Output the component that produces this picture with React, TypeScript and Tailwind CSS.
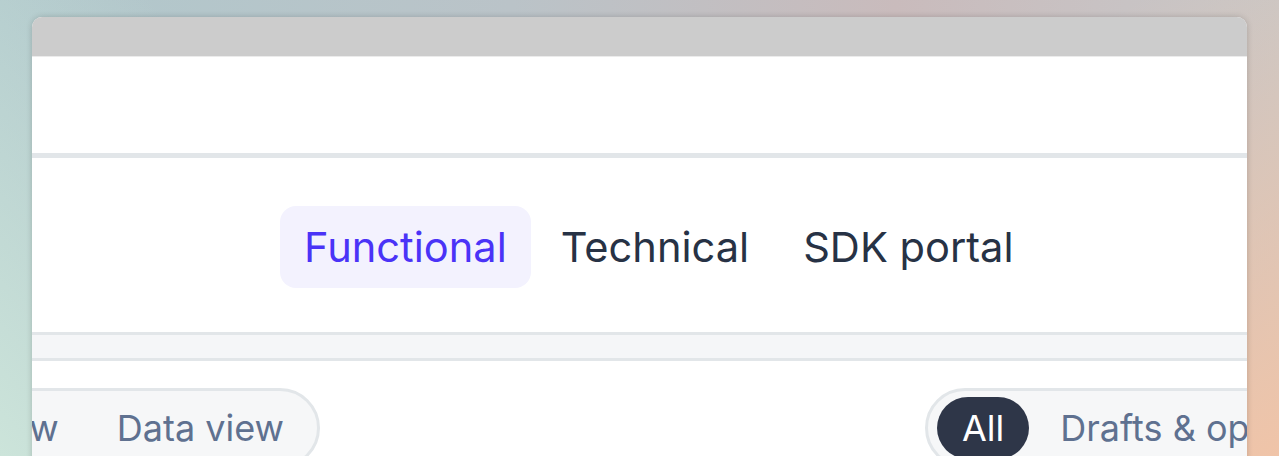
import React from "react";

export default function App() {
  return (
    <div
      className="relative h-[456px] w-[1279px] overflow-hidden pl-[32px] pr-[32px] pt-[17px]"
      style={{ fontFamily: "Inter, 'Noto Sans', sans-serif" }}
    >
      <div className="absolute inset-0 bg-[linear-gradient(90deg,#b0c8cc_0%,#bac3c8_40%,#c9bbbc_70%,#c8c3c4_88%,#c8c7c7_100%)]" />
      <div className="absolute inset-0 bg-[linear-gradient(45deg,rgba(204,228,218,1)_0%,rgba(204,228,218,0)_35%)]" />
      <div className="absolute inset-0 bg-[linear-gradient(150deg,rgba(240,196,168,0)_55%,rgba(240,196,168,1)_100%)]" />
      <div className="relative h-[600px] overflow-hidden rounded-t-[10px] bg-white shadow-[0_0_6px_rgba(0,0,0,0.18)]">
        <div className="h-[39px] bg-[#cccccc]" />
        <div className="h-[1px] bg-[#ebebeb]" />
        <div className="h-[96px] bg-white" />
        <div className="h-[5px] bg-[#e2e6e9]" />
        <div className="flex h-[174px] items-start bg-white pl-[248px] pt-[48px]">
          <div className="flex gap-[6px]">
            <div className="flex h-[82px] items-center rounded-[16px] bg-[#f3f2fe] px-[24px] text-[41.6px] text-[#4a33f7]">
              Functional
            </div>
            <div className="flex h-[82px] items-center rounded-[16px] px-[24px] text-[41.6px] text-[#273245]">
              Technical
            </div>
            <div className="flex h-[82px] items-center rounded-[16px] px-[24px] text-[41.6px] text-[#273245]">
              SDK portal
            </div>
          </div>
        </div>
        <div className="h-[3px] bg-[#e2e6e9]" />
        <div className="h-[23px] bg-[#f5f6f8]" />
        <div className="h-[3px] bg-[#e2e6e9]" />
        <div className="flex items-start pt-[27px]">
          <div className="flex w-[288px] shrink-0 justify-end">
            <div className="flex h-[80px] shrink-0 items-center rounded-full border-[3px] border-[#e2e6e9] bg-[#f6f7f8] px-[4px] text-[36px] text-[#5f7190]">
              <div className="whitespace-nowrap px-[29px]">Board view</div>
              <div className="whitespace-nowrap px-[29px]">Data view</div>
            </div>
          </div>
          <div className="ml-[605px] flex h-[80px] shrink-0 items-start gap-[6px] rounded-full border-[3px] border-[#e2e6e9] bg-[#f6f7f8] pl-[9px] pr-[9px] pt-[6px] text-[36px] text-[#5f7190]">
            <div className="flex h-[62px] items-center rounded-full bg-[#2e3648] px-[25px] text-white">
              All
            </div>
            <div className="flex h-[62px] items-center whitespace-nowrap px-[25px]">Drafts &amp; open</div>
          </div>
        </div>
      </div>
    </div>
  );
}
